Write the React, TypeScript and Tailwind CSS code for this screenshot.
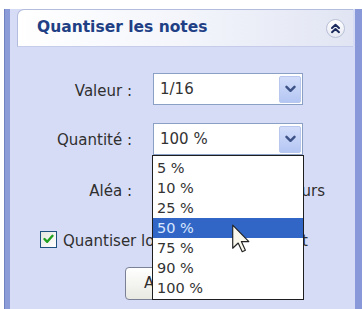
import React from "react";

const font = { fontFamily: '"DejaVu Sans", "Liberation Sans", sans-serif' };

function Chevron() {
  return (
    <svg width="11" height="8" viewBox="0 0 11 8">
      <path d="M1.5 1.8 L5.5 5.8 L9.5 1.8" fill="none" stroke="#3d5286" strokeWidth="2.4" strokeLinecap="round" strokeLinejoin="round" />
    </svg>
  );
}

function Combo({ value }: { value: string }) {
  return (
    <div className="w-[150px] h-[32px] bg-white border border-[#8aa0c4] flex items-center pl-[6px] pr-[1px]">
      <span className="flex-1 text-[15px] text-[#333]">{value}</span>
      <div className="w-[22px] h-[27px] rounded-[2px] border border-[#b7c7ee] bg-gradient-to-b from-[#d3ddfa] to-[#b4c6f3] flex items-center justify-center">
        <Chevron />
      </div>
    </div>
  );
}

const items = ["5 %", "10 %", "25 %", "50 %", "75 %", "90 %", "100 %"];

export default function App() {
  return (
    <div className="relative w-[362px] h-[309px] overflow-hidden bg-white flex pt-[9px]" style={font}>
      <div className="w-[4px] shrink-0" />
      <div className="w-[6px] shrink-0 bg-[#8c9cd8] border-l border-[#7182c0]" />
      <div className="w-[345px] shrink-0 bg-[#d7dcf6] flex">
        <div className="w-[7px] shrink-0" />
        <div className="w-[336px] shrink-0 flex flex-col">
          <div className="h-[38px] rounded-tl-[7px] border-t border-l border-[#b3bcdc] border-b border-b-[#c6cdea] bg-gradient-to-r from-white via-[#f3f5fb] to-[#e1e5f3] flex items-center pl-[19px] pr-[8px]">
            <span className="flex-1 text-[15.5px] font-bold text-[#213f85] leading-none">Quantiser les notes</span>
            <div className="w-[19px] h-[19px] rounded-full border border-[#b9c0d6] bg-gradient-to-b from-white to-[#e6e9f2] flex items-center justify-center">
              <svg width="11" height="11" viewBox="0 0 11 11">
                <path d="M2 5 L5.5 1.8 L9 5 M2 9.2 L5.5 6 L9 9.2" fill="none" stroke="#1b2a5c" strokeWidth="2" strokeLinecap="round" strokeLinejoin="round" />
              </svg>
            </div>
          </div>
          <div className="flex flex-col pt-[26px] text-[15px] text-[#2f2f2f]">
            <div className="flex items-center h-[32px]">
              <div className="w-[115px] text-right pt-[4px]">Valeur :</div>
              <div className="ml-[21px]"><Combo value="1/16" /></div>
            </div>
            <div className="flex items-center h-[32px] mt-[18px]">
              <div className="w-[115px] text-right pt-[3px]">Quantité :</div>
              <div className="ml-[21px]"><Combo value="100 %" /></div>
            </div>
            <div className="flex items-center h-[32px] mt-[20px]">
              <div className="w-[115px] text-right">Aléa :</div>
              <div className="ml-[21px] w-[60px] h-[28px] bg-white border border-[#8aa0c4] pl-[6px] flex items-center">0</div>
              <div className="ml-[57px]">valeurs</div>
            </div>
            <div className="flex items-center h-[20px] mt-[22px] pl-[23px]">
              <div className="w-[17px] h-[17px] border border-[#1c5180] bg-gradient-to-br from-[#e6e6e0] to-white flex items-center justify-center">
                <svg width="11" height="10" viewBox="0 0 11 10">
                  <path d="M1.5 5 L4.2 7.8 L9.5 1.8" fill="none" stroke="#21a121" strokeWidth="2.4" strokeLinecap="round" strokeLinejoin="round" />
                </svg>
              </div>
              <span className="ml-[6px] pt-[4px] whitespace-nowrap">
                Quantiser lo<span className="tracking-[1.6px]">ngueurs et début</span>
              </span>
            </div>
            <div className="flex h-[33px] mt-[18px] pl-[108px]">
              <div className="w-[110px] h-[33px] rounded-[4px] border border-[#7a8196] bg-gradient-to-b from-white to-[#e9e9e2] flex items-center justify-center">
                Appliquer
              </div>
            </div>
          </div>
        </div>
      </div>
      <div className="w-[7px] shrink-0 bg-[#8898d8]" />

      <div className="absolute left-[152px] top-[155px] w-[152px] h-[145px] bg-white border border-[#1e1e1e] pt-[2px] text-[14.5px] text-[#333]">
        {items.map((it) => (
          <div
            key={it}
            className={
              it === "50 %"
                ? "h-[20px] leading-[20px] pl-[4px] bg-[#3166c6] text-[#d8e6ff]"
                : "h-[20px] leading-[20px] pl-[4px]"
            }
          >
            {it}
          </div>
        ))}
      </div>

      <svg className="absolute left-[232px] top-[224px]" width="18" height="29" viewBox="-0.5 -0.5 12.5 19.5">
        <path d="M0 0 L0 16 L3.8 12.4 L6.6 18.4 L8.8 17.4 L6 11.4 L11.2 11.4 Z" fill="#fbf9ee" stroke="#222" strokeWidth="0.8" strokeLinejoin="round" />
      </svg>
    </div>
  );
}
